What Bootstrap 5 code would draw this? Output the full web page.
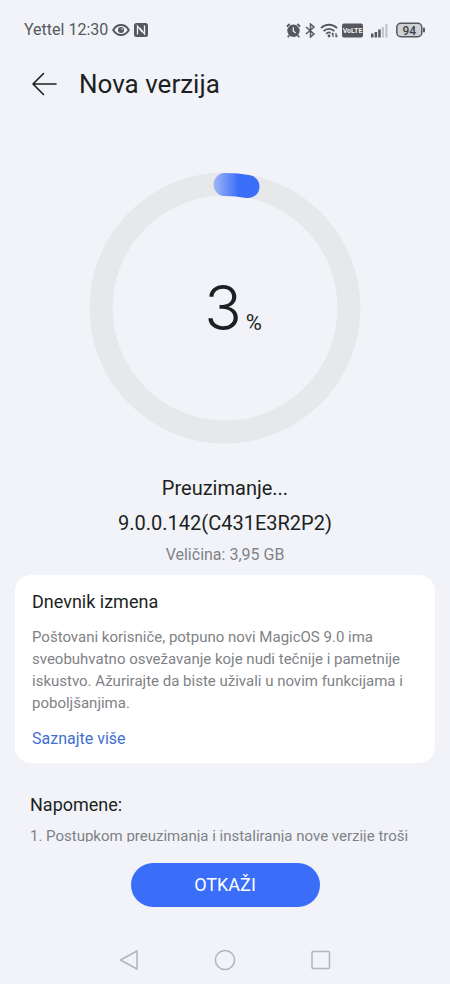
<!DOCTYPE html>
<html lang="sr-Latn">
<head>
<meta charset="utf-8">
<meta name="viewport" content="width=device-width, initial-scale=1">
<title>Nova verzija</title>
<link href="https://cdn.jsdelivr.net/npm/bootstrap@5.3.0/dist/css/bootstrap.min.css" rel="stylesheet">
<style>
  :root { --page: #f1f3f8; --ink: #1d1f22; --muted: #808286; --accent: #3b6ef8; --status: #55585c; }
  body { background: var(--page); color: var(--ink); font-family: Roboto, "Liberation Sans", sans-serif; }
  svg { display: block; flex: none; }
  .status-bar { height: 60px; padding: 0 25px 0 24px; color: var(--status); font-size: 16px; line-height: 24px; }
  .title-bar { height: 48px; padding: 0 29px; gap: 20px; }
  .title-bar h1 { font-size: 26px; line-height: 32px; }
  .back { color: var(--ink); }
  .scroller { overflow-y: auto; scrollbar-width: none; padding-top: 64px; min-height: 0; }
  .scroller::-webkit-scrollbar { display: none; }
  .ring { width: 272px; }
  .percent { padding-left: 16px; }
  .percent-value { font-family: Inter, Roboto, sans-serif; font-size: 62px; font-weight: 300; line-height: 64px; }
  .percent-sign { font-size: 22px; }
  .state { margin-top: 32px; font-size: 20px; line-height: 24px; }
  .version { margin-top: 11px; font-size: 20px; line-height: 24px; }
  .size { margin-top: 10px; font-size: 16px; line-height: 20px; color: var(--muted); }
  .log { margin: 10px 15px 0; padding: 15px 17px 13px; border-radius: 16px; }
  .notes { padding: 30px 30px 0; }
  .section-title { font-size: 18px; line-height: 24px; }
  .copy { margin-top: 12px; font-size: 15px; line-height: 22px; color: var(--muted); }
  .more { width: fit-content; margin-top: 14px; font-size: 16px; line-height: 22px; color: #426fd0; }
  .notes .copy { margin-top: 8px; }
  .actions { padding: 21px 0 29px; }
  .cancel { width: 42%; height: 44px; background: var(--accent); color: #fff; font-size: 18px; line-height: 24px; }
  .cancel:hover { background: #2f60e4; color: #fff; }
  .system-nav { height: 48px; gap: 66px; color: #b2b4b9; }
</style>
</head>
<body>
<div class="vh-100 d-flex flex-column">
  <div class="status-bar d-flex align-items-center justify-content-between flex-shrink-0">
    <div class="d-flex align-items-center gap-1">
      <span>Yettel 12:30</span>
      <svg width="18" height="14" viewBox="0 0 18 14" fill="none" stroke="currentColor" stroke-width="2" aria-hidden="true"><path d="M1.2 7C3.2 3.600 5.800 2 9 2s5.800 1.600 7.800 5C14.800 10.400 12.200 12 9 12S3.200 10.400 1.200 7z"/><circle cx="9" cy="7" r="3" fill="currentColor" stroke="none"/><circle cx="10" cy="6" r=".8" fill="#f1f3f8" stroke="none"/></svg>
      <svg width="14" height="14" viewBox="0 0 14 14" fill="none" aria-hidden="true"><rect width="14" height="14" rx="2.500" fill="currentColor"/><path d="M3.500 11.500V3.200L8.300 9.200M10.500 2.500v8.300L5.700 4.800" stroke="#f1f3f8" stroke-width="1.300"/></svg>
    </div>
    <div class="d-flex align-items-center gap-1">
      <svg width="15" height="15" viewBox="0 0 15 15" fill="none" aria-hidden="true"><circle cx="7.500" cy="7.800" r="6.200" fill="currentColor"/><path d="M.8 3.700 3.700 1M14.200 3.700 11.300 1M3 12.500l-1.200 1.700M12 12.500l1.200 1.700" stroke="currentColor" stroke-width="1.800"/><path d="M7.300 4.300v4l2.400 1.800" stroke="#f1f3f8" stroke-width="1.200"/></svg>
      <svg width="11" height="15" viewBox="0 0 11 15" fill="none" stroke="currentColor" stroke-width="1.500" aria-hidden="true"><path d="M1 4l8 7-3.500 3V1L9 4l-8 7"/></svg>
      <svg width="18" height="15" viewBox="0 0 18 15" fill="none" stroke="currentColor" stroke-width="1.800" aria-hidden="true"><path d="M1 5.200C5.500.6 12.500.6 17 5.200M3.600 8.100c3-3 7.800-3 10.800 0M6.200 10.800c1.300-1.300 3-1.600 4.400-1"/><circle cx="9" cy="13" r="1.400" fill="currentColor" stroke="none"/><path d="M13 10v4M13 10l-1.300 1.500M16 14v-4M16 14l1.300-1.500" stroke-width="1.200"/></svg>
      <svg width="21" height="15" viewBox="0 0 21 15" aria-label="VoLTE"><rect y=".5" width="21" height="14" rx="2" fill="currentColor"/><text x="10.500" y="10" text-anchor="middle" font-size="7" font-weight="700" fill="#f1f3f8">VoLTE</text></svg>
      <svg class="ms-1" width="17" height="15" viewBox="0 0 17 15" fill="currentColor" aria-hidden="true"><rect y="10.500" width="2.500" height="4"/><rect x="3.600" y="9" width="2.500" height="5.500"/><rect x="7.200" y="6.500" width="2.500" height="8"/><rect x="10.800" y="4" width="2.200" height="10.500" opacity=".3"/><rect x="14.300" y="1" width="2.200" height="13.500" opacity=".3"/></svg>
      <svg class="ms-1" width="29" height="16" viewBox="0 0 29 16" aria-label="94%"><rect x=".8" y="1.300" width="25" height="13.400" rx="4" fill="#cfd1d5" stroke="currentColor" stroke-width="1.500"/><rect x="27" y="5.500" width="2" height="5" rx="1" fill="currentColor"/><text x="13.300" y="12.500" text-anchor="middle" font-size="12" font-weight="500" fill="#3f4246">94</text></svg>
    </div>
  </div>
  <header class="title-bar d-flex align-items-center flex-shrink-0">
    <button type="button" class="back btn p-0 border-0" aria-label="Nazad"><svg width="30" height="26" viewBox="0 0 30 26" fill="none" stroke="currentColor" stroke-width="1.600" stroke-linecap="round" stroke-linejoin="round"><path d="M27 13H4M14.500 2.500 4 13l10.500 10.500"/></svg></button>
    <h1 class="m-0 fw-normal">Nova verzija</h1>
  </header>
  <main class="scroller flex-grow-1">
    <section class="text-center">
      <div class="ring position-relative mx-auto">
        <svg class="w-100" viewBox="0 0 272 272" fill="none" stroke-width="23" aria-hidden="true">
          <defs><linearGradient id="arc" gradientUnits="userSpaceOnUse" x1="124" y1="0" x2="149" y2="0"><stop stop-color="#a3b9f5"/><stop offset=".85" stop-color="#4e7af6"/><stop offset="1" stop-color="#3b6ef8"/></linearGradient></defs>
          <circle cx="136" cy="136" r="124" stroke="#e6e8ea"/>
          <path d="M136 12.500A123.500 123.500 0 0 1 159 14.600" stroke="url(#arc)" stroke-linecap="round"/>
        </svg>
        <div class="percent position-absolute top-0 start-0 w-100 h-100 d-flex align-items-center justify-content-center">
          <div class="d-flex align-items-baseline"><span class="percent-value">3</span><span class="percent-sign ms-1">%</span></div>
        </div>
      </div>
      <p class="state mb-0">Preuzimanje...</p>
      <p class="version mb-0">9.0.0.142(C431E3R2P2)</p>
      <p class="size mb-0">Veličina: 3,95 GB</p>
    </section>
    <section class="log bg-white">
      <h2 class="section-title fw-normal mb-0">Dnevnik izmena</h2>
      <p class="copy mb-0">Poštovani korisniče, potpuno novi MagicOS 9.0 ima sveobuhvatno osvežavanje koje nudi tečnije i pametnije iskustvo. Ažurirajte da biste uživali u novim funkcijama i poboljšanjima.</p>
      <a class="more d-block text-decoration-none" href="#">Saznajte više</a>
    </section>
    <section class="notes">
      <h2 class="section-title fw-normal mb-0">Napomene:</h2>
      <p class="copy mb-0">1. Postupkom preuzimanja i instaliranja nove verzije troši</p>
    </section>
  </main>
  <footer class="flex-shrink-0">
    <div class="actions d-flex justify-content-center"><button type="button" class="cancel btn rounded-pill border-0 p-0">OTKAŽI</button></div>
    <nav class="system-nav d-flex align-items-center justify-content-center" aria-label="Sistem">
      <button type="button" class="btn p-0 border-0 text-reset" aria-label="Nazad"><svg width="30" height="24" viewBox="0 0 30 24" fill="none" stroke="currentColor" stroke-width="1.500" stroke-linejoin="round"><path d="M23 3v18L6.500 12z"/></svg></button>
      <button type="button" class="btn p-0 border-0 text-reset" aria-label="Početni ekran"><svg width="30" height="24" viewBox="0 0 30 24" fill="none" stroke="currentColor" stroke-width="1.500"><circle cx="15" cy="12" r="9.600"/></svg></button>
      <button type="button" class="btn p-0 border-0 text-reset" aria-label="Nedavno"><svg width="30" height="24" viewBox="0 0 30 24" fill="none" stroke="currentColor" stroke-width="1.500"><rect x="6" y="3.500" width="17.500" height="17" rx="1"/></svg></button>
    </nav>
  </footer>
</div>
<script src="https://cdn.jsdelivr.net/npm/bootstrap@5.3.0/dist/js/bootstrap.bundle.min.js"></script>
</body>
</html>
